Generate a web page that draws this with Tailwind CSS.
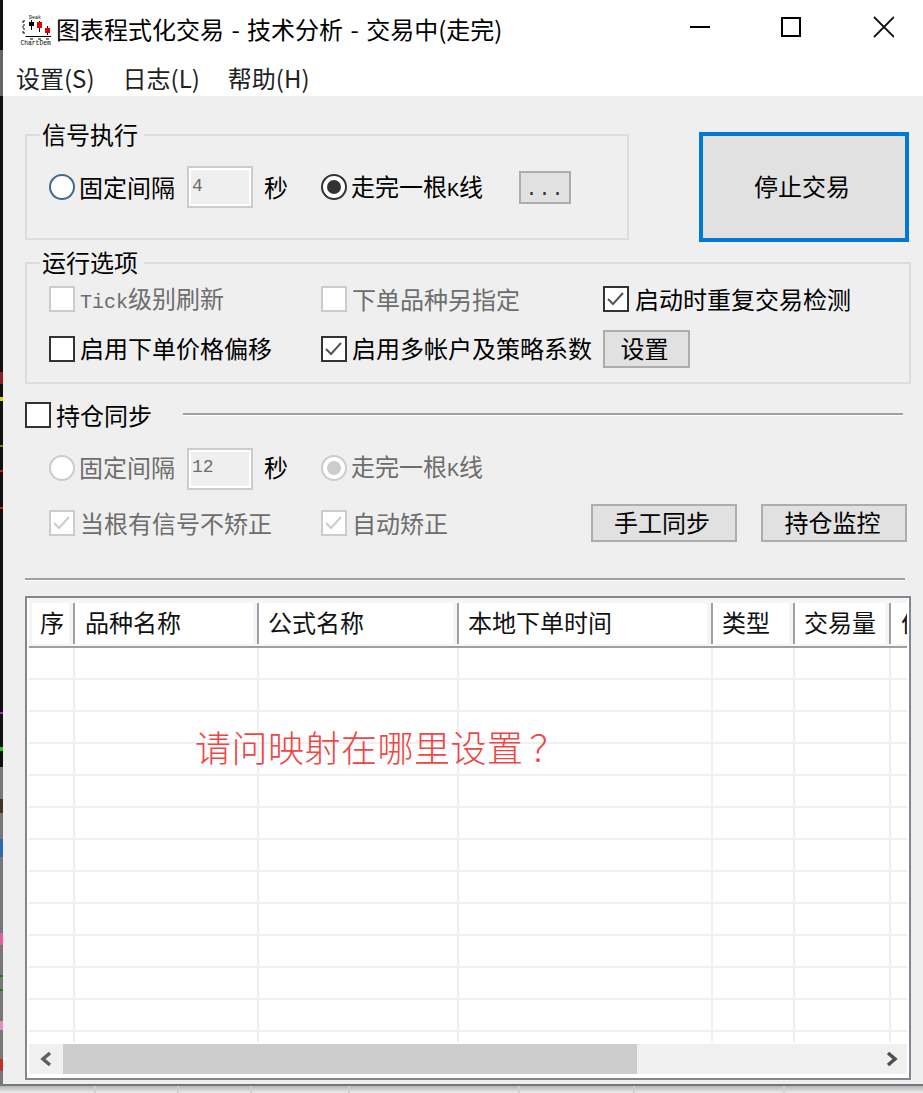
<!DOCTYPE html>
<html lang="zh-CN">
<head>
  <meta charset="UTF-8">
  <title>图表程式化交易</title>
  <script src="https://cdn.jsdelivr.net/npm/@tailwindcss/browser@4"></script>
</head>
<body class="w-[923px] h-[1093px] overflow-hidden bg-[#e9e9e9] text-black text-[24px] leading-none font-['Noto_Sans_CJK_SC',sans-serif]">
<div class="flex h-[1086px]">
  <!-- desktop behind the window, left edge -->
  <div class="w-[3px] flex flex-col bg-[#777777]">
    <div class="h-[50px] bg-[#111111]"></div>
    <div class="h-[46px] bg-[#666666]"></div>
    <div class="h-[276px] bg-[#111111]"></div>
    <div class="h-[12px] bg-[#8a2020]"></div>
    <div class="h-[13px] bg-[#111111]"></div>
    <div class="h-[4px] bg-[#d8d800]"></div>
    <div class="h-[44px] bg-[#111111]"></div>
    <div class="h-[2px] bg-[#808000]"></div>
    <div class="h-[23px] bg-[#111111]"></div>
    <div class="h-[2px] bg-[#e01010]"></div>
    <div class="h-[35px] bg-[#111111]"></div>
    <div class="h-[2px] bg-[#e01010]"></div>
    <div class="h-[203px] bg-[#111111]"></div>
    <div class="h-[2px] bg-[#c020c0]"></div>
    <div class="h-[33px] bg-[#111111]"></div>
    <div class="h-[4px] bg-[#20c020]"></div>
    <div class="h-[16px] bg-[#111111]"></div>
    <div class="h-[32px]"></div>
    <div class="h-[14px] bg-[#443322]"></div>
    <div class="h-[26px]"></div>
    <div class="h-[18px] bg-[#3366aa]"></div>
    <div class="h-[76px]"></div>
    <div class="h-[12px] bg-[#e060a0]"></div>
    <div class="h-[30px]"></div>
    <div class="h-[2px] bg-[#108010]"></div>
    <div class="h-[12px]"></div>
    <div class="h-[2px] bg-[#108010]"></div>
    <div class="h-[30px]"></div>
    <div class="h-[9px] bg-[#e090c0]"></div>
    <div class="h-[29px]"></div>
    <div class="h-[12px] bg-[#c03030]"></div>
  </div>

  <!-- window -->
  <div class="w-[920px] flex flex-col border-b-2 border-[#777777]">
    <!-- title bar -->
    <div class="h-[62px] bg-white flex items-center">
      <svg class="ml-[17px] mt-[-2px] shrink-0" width="32" height="32" viewBox="0 0 32 32">
        <text x="9" y="5" font-size="5" font-family="Liberation Mono">Deak</text>
        <path d="M4 6v16M2 8h2M2 13h2M2 18h2" stroke="#000" stroke-dasharray="2 2" fill="none"/>
        <path d="M5.500 22.500H31" stroke="#000" fill="none"/>
        <path d="M10 25h3M18 25h3M26 25h3" stroke="#000" fill="none"/>
        <path d="M11.500 6v10" stroke="#000" fill="none"/>
        <rect x="9" y="8" width="5" height="4" fill="#000"/>
        <path d="M19.500 7v11M27.500 12v9" stroke="#000" fill="none"/>
        <rect x="17" y="8" width="5" height="6" fill="#e80000"/>
        <rect x="25" y="14" width="5" height="5" fill="#e80000"/>
        <text x="0.500" y="31" font-size="6.300" font-family="Liberation Mono">ChartDem</text>
      </svg>
      <span class="ml-[4px] mb-[5px] [word-spacing:2px]">图表程式化交易 - 技术分析 - 交易中(走完)</span>
      <svg class="ml-auto mb-[8px] mr-[29px]" width="204" height="24" viewBox="0 0 204 24">
        <path d="M0 12h20" stroke="#000" stroke-width="2" fill="none"/>
        <rect x="92" y="3" width="18" height="18" stroke="#000" stroke-width="2" fill="none"/>
        <path d="M184 2l20 20M204 2l-20 20" stroke="#111" stroke-width="1.800" fill="none"/>
      </svg>
    </div>
    <!-- menu -->
    <div class="h-[34px] bg-white flex items-center gap-[28px] pl-[13px] pb-[2px] text-[#222222]">
      <span>设置(S)</span>
      <span>日志(L)</span>
      <span>帮助(H)</span>
    </div>

    <!-- client area -->
    <div class="flex-1 bg-[#efefef] pl-[22px] flex flex-col">
      <div class="flex mt-[36px]">
        <!-- 信号执行 -->
        <div class="mt-[2px] w-[604px] h-[106px] border-2 border-[#dcdcdc]">
          <div class="-mt-[17px] ml-[13px] w-fit h-[32px] pl-[2px] pr-[6px] pb-[3px] bg-[#efefef] flex items-center">信号执行</div>
          <div class="mt-[15px] pl-[22px] flex items-center h-[42px]">
            <span class="w-[26px] h-[26px] rounded-full border-2 border-[#3f6b8f] bg-white shrink-0"></span>
            <span class="ml-[4px]">固定间隔</span>
            <div class="ml-[12px] w-[66px] h-[42px] border-2 border-[#cccccc] shadow-[inset_0_0_0_2px_#ffffff] pl-[3px] pt-[9px] text-[18px] text-[#6d6d6d] font-['Liberation_Mono',monospace]">4</div>
            <span class="ml-[11px]">秒</span>
            <span class="ml-[33px] w-[26px] h-[26px] rounded-full border-2 border-[#333333] bg-white shrink-0 flex items-center justify-center">
              <span class="w-[14px] h-[14px] rounded-full bg-[#333333]"></span>
            </span>
            <span class="ml-[4px]">走完一根<span class="text-[20px] font-['Liberation_Mono',monospace]">K</span>线</span>
            <button class="ml-[36px] w-[52px] h-[33px] border-2 border-[#adadad] bg-[#e1e1e1] pt-[6px] text-[20px] text-[#333333] tracking-[1px] font-['Liberation_Mono',monospace]">...</button>
          </div>
        </div>
        <!-- 停止交易 -->
        <button class="ml-[70px] w-[210px] h-[110px] border-4 border-[#0078d7] bg-[#e1e1e1] pr-[4px] pb-[2px]">停止交易</button>
      </div>

      <!-- 运行选项 -->
      <div class="mt-[20px] w-[886px] h-[122px] border-2 border-[#dcdcdc]">
        <div class="-mt-[17px] ml-[13px] w-fit h-[32px] pl-[2px] pr-[6px] pb-[3px] bg-[#efefef] flex items-center">运行选项</div>
        <div class="mt-[7px] pl-[22px] grid grid-cols-[272px_282px_1fr] items-center">
          <div class="flex items-center h-[26px] text-[#6d6d6d]">
            <span class="w-[26px] h-[26px] border-2 border-[#cccccc] bg-white"></span>
            <span class="ml-[5px]"><span class="text-[20px] font-['Liberation_Mono',monospace]">Tick</span>级别刷新</span>
          </div>
          <div class="flex items-center h-[26px] text-[#6d6d6d]">
            <span class="w-[26px] h-[26px] border-2 border-[#cccccc] bg-white"></span>
            <span class="ml-[5px]">下单品种另指定</span>
          </div>
          <div class="flex items-center h-[26px]">
            <span class="w-[26px] h-[26px] border-2 border-[#333333] bg-white">
              <svg width="22" height="22" viewBox="0 0 22 22"><path d="M3 11l5 5 10-11" stroke="#555555" stroke-width="2" fill="none"/></svg>
            </span>
            <span class="ml-[6px]">启动时重复交易检测</span>
          </div>
        </div>
        <div class="mt-[18px] pl-[22px] grid grid-cols-[272px_282px_1fr] items-center">
          <div class="flex items-center h-[38px]">
            <span class="w-[26px] h-[26px] border-2 border-[#333333] bg-white"></span>
            <span class="ml-[5px] mb-[2px]">启用下单价格偏移</span>
          </div>
          <div class="flex items-center h-[38px]">
            <span class="w-[26px] h-[26px] border-2 border-[#333333] bg-white">
              <svg width="22" height="22" viewBox="0 0 22 22"><path d="M3 11l5 5 10-11" stroke="#555555" stroke-width="2" fill="none"/></svg>
            </span>
            <span class="ml-[5px] mb-[2px]">启用多帐户及策略系数</span>
          </div>
          <button class="w-[87px] h-[38px] border-2 border-[#adadad] bg-[#e1e1e1] pr-[4px] pb-[2px]">设置</button>
        </div>
      </div>

      <!-- 持仓同步 -->
      <div class="mt-[18px] flex items-center h-[26px]">
        <span class="w-[26px] h-[26px] border-2 border-[#333333] bg-white"></span>
        <span class="ml-[5px]">持仓同步</span>
        <div class="ml-[31px] w-[720px] h-[3px] border-t-2 border-[#a0a0a0] bg-white -mt-[2px]"></div>
      </div>
      <div class="mt-[20px] pl-[24px] flex items-center h-[42px]">
        <span class="mb-[2px] w-[26px] h-[26px] rounded-full border-2 border-[#cccccc] bg-white shrink-0"></span>
        <span class="ml-[4px] mb-[4px] text-[#6d6d6d]">固定间隔</span>
        <div class="ml-[12px] w-[66px] h-[42px] border-2 border-[#cccccc] shadow-[inset_0_0_0_2px_#ffffff] pl-[3px] pt-[8px] text-[18px] text-[#6d6d6d] font-['Liberation_Mono',monospace]">12</div>
        <span class="ml-[11px] mb-[4px]">秒</span>
        <span class="mb-[2px] ml-[33px] w-[26px] h-[26px] rounded-full border-2 border-[#cccccc] bg-white shrink-0 flex items-center justify-center">
          <span class="w-[14px] h-[14px] rounded-full bg-[#cccccc]"></span>
        </span>
        <span class="ml-[4px] mb-[4px] text-[#6d6d6d]">走完一根<span class="text-[20px] font-['Liberation_Mono',monospace]">K</span>线</span>
      </div>
      <div class="mt-[14px] pl-[24px] flex items-center h-[38px]">
        <span class="w-[26px] h-[26px] border-2 border-[#cccccc] bg-white">
          <svg width="22" height="22" viewBox="0 0 22 22"><path d="M3 11l5 5 10-11" stroke="#cccccc" stroke-width="2" fill="none"/></svg>
        </span>
        <span class="ml-[5px] w-[241px] text-[#6d6d6d]">当根有信号不矫正</span>
        <span class="w-[26px] h-[26px] border-2 border-[#cccccc] bg-white">
          <svg width="22" height="22" viewBox="0 0 22 22"><path d="M3 11l5 5 10-11" stroke="#cccccc" stroke-width="2" fill="none"/></svg>
        </span>
        <span class="ml-[5px] w-[239px] text-[#6d6d6d]">自动矫正</span>
        <button class="w-[146px] h-[38px] border-2 border-[#adadad] bg-[#e1e1e1] pr-[4px] pb-[3px]">手工同步</button>
        <button class="ml-[24px] w-[146px] h-[38px] border-2 border-[#adadad] bg-[#e1e1e1] pr-[3px] pb-[3px]">持仓监控</button>
      </div>

      <div class="mt-[36px] w-[880px] h-[3px] border-t-2 border-[#a0a0a0] bg-white"></div>

      <!-- order table -->
      <div class="relative mt-[15px] w-[886px] h-[484px] border-2 border-[#828790] bg-white px-[2px] overflow-hidden">
        <div class="grid grid-cols-[46px_184px_200px_254px_82px_96px_16px] bg-[#f5f5f5] pt-[5px] pb-[2px] border-b-2 border-[#a0a0a0] text-[#111111]">
          <div class="border-r-2 border-[#a0a0a0]"><div class="h-[41px] ml-[3px] mr-[4px] pl-[8px] pb-[3px] bg-white flex items-center">序</div></div>
          <div class="border-r-2 border-[#a0a0a0]"><div class="h-[41px] mr-[4px] pl-[10px] pb-[3px] bg-white flex items-center">品种名称</div></div>
          <div class="border-r-2 border-[#a0a0a0]"><div class="h-[41px] mr-[4px] pl-[9px] pb-[3px] bg-white flex items-center">公式名称</div></div>
          <div class="border-r-2 border-[#a0a0a0]"><div class="h-[41px] mr-[4px] pl-[9px] pb-[3px] bg-white flex items-center">本地下单时间</div></div>
          <div class="border-r-2 border-[#a0a0a0]"><div class="h-[41px] mr-[4px] pl-[9px] pb-[3px] bg-white flex items-center">类型</div></div>
          <div class="border-r-2 border-[#a0a0a0]"><div class="h-[41px] mr-[4px] pl-[9px] pb-[3px] bg-white flex items-center">交易量</div></div>
          <div class="overflow-hidden"><div class="h-[41px] w-[60px] pl-[10px] pb-[3px] bg-white flex items-center whitespace-nowrap">价格</div></div>
        </div>
        <div id="rows" class="h-[394px] mb-[2px] overflow-hidden"></div>
        <!-- scrollbar -->
        <div class="flex h-[30px] bg-[#f0f0f0]">
          <div class="w-[34px] flex items-center justify-center">
            <svg width="14" height="14" viewBox="0 0 14 14"><path d="M11 1L4 7l7 6" stroke="#606060" stroke-width="3.500" fill="none"/></svg>
          </div>
          <div class="w-[574px] bg-[#cdcdcd]"></div>
          <div class="flex-1 flex items-center justify-end pr-[8px]">
            <svg width="14" height="14" viewBox="0 0 14 14"><path d="M3 1l7 6-7 6" stroke="#505050" stroke-width="3.500" fill="none"/></svg>
          </div>
        </div>
        <!-- note written over the screenshot -->
        <div class="absolute left-[168px] top-[130px] text-[36px] text-[#f04545] font-light tracking-[0.5px]">请问映射在哪里设置<span class="ml-[6px]">？</span></div>
      </div>
    </div>
  </div>
</div>
<!-- window shadow over whatever is below -->
<div class="h-[7px] flex bg-gradient-to-b from-[#b5b5b5] to-[#ececec]">
  <div class="w-[96px] border-r-2 border-[#d0d0d0]"></div>
  <div class="w-[83px] border-r-2 border-[#d0d0d0]"></div>
  <div class="w-[73px] border-r-2 border-[#d0d0d0]"></div>
  <div class="w-[98px] border-r-2 border-[#d0d0d0]"></div>
  <div class="w-[170px] border-r-2 border-[#d0d0d0]"></div>
  <div class="w-[115px] border-r-2 border-[#d0d0d0]"></div>
  <div class="w-[150px] border-r-2 border-[#d0d0d0]"></div>
</div>
<script>
  // empty grid rows of the order list, the last one is cut off by the scrollbar
  const rows = document.getElementById('rows');
  const cell = '<div class="border-r-2 border-b-2 border-[#f0f0f0]"></div>';
  const lastCell = '<div class="border-b-2 border-[#f0f0f0]"></div>';
  for (let i = 0; i < 13; i++) {
    rows.insertAdjacentHTML('beforeend',
      '<div class="grid grid-cols-[46px_184px_200px_254px_82px_96px_16px] h-[32px]">' + cell.repeat(6) + lastCell + '</div>');
  }
</script>
</body>
</html>
